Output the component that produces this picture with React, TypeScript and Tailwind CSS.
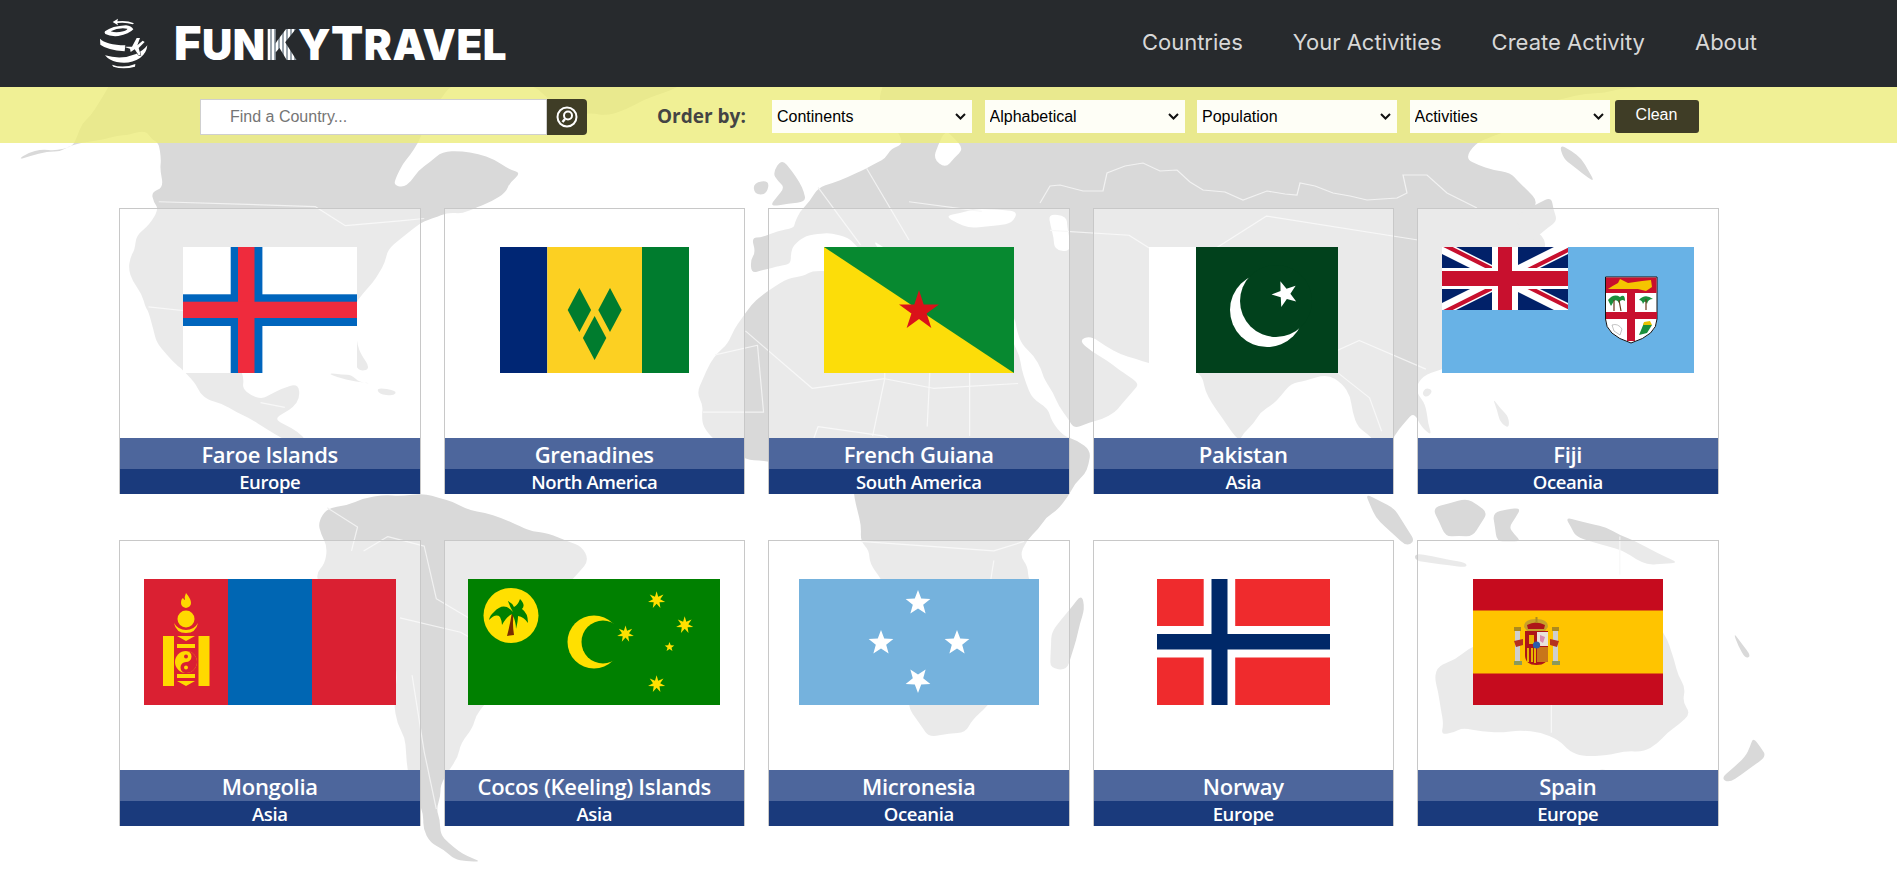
import React from "react";

const star = (cx: number, cy: number, r: number, n = 5, ratio = 0.42, rot = -90) => {
  const pts: string[] = [];
  for (let i = 0; i < n * 2; i++) {
    const a = ((rot + (i * 180) / n) * Math.PI) / 180;
    const q = i % 2 ? r * ratio : r;
    pts.push(`${(cx + q * Math.cos(a)).toFixed(2)},${(cy + q * Math.sin(a)).toFixed(2)}`);
  }
  return pts.join(" ");
};

const organic = (d: string, amp = 5, step = 34) =>
  d
    .split("Z")
    .filter((s) => s.trim())
    .map((sub, si) => {
      const nums = (sub.match(/-?\d+(\.\d+)?/g) || []).map(Number);
      const base: [number, number][] = [];
      for (let i = 0; i + 1 < nums.length; i += 2) base.push([nums[i], nums[i + 1]]);
      const pts: [number, number][] = [];
      base.forEach((p, i) => {
        const q = base[(i + 1) % base.length];
        const len = Math.hypot(q[0] - p[0], q[1] - p[1]);
        const n = Math.max(1, Math.ceil(len / step));
        for (let k = 0; k < n; k++) {
          const t = k / n;
          const s1 = Math.sin((p[0] + k * 13.7 + si) * 12.9898 + (p[1] + k) * 78.233) * 43758.5453;
          const s2 = Math.sin((p[0] + k * 7.3) * 39.346 + (p[1] + si) * 11.135) * 24634.6345;
          const j = k === 0 ? 0 : amp;
          pts.push([
            p[0] + (q[0] - p[0]) * t + (s1 - Math.floor(s1) - 0.5) * 2 * j,
            p[1] + (q[1] - p[1]) * t + (s2 - Math.floor(s2) - 0.5) * 2 * j,
          ]);
        }
      });
      const mid = (a: [number, number], b: [number, number]) => [(a[0] + b[0]) / 2, (a[1] + b[1]) / 2];
      const m0 = mid(pts[pts.length - 1], pts[0]);
      let out = `M${m0[0].toFixed(1)} ${m0[1].toFixed(1)}`;
      pts.forEach((p, i) => {
        const m = mid(p, pts[(i + 1) % pts.length]);
        out += `Q${p[0].toFixed(1)} ${p[1].toFixed(1)} ${m[0].toFixed(1)} ${m[1].toFixed(1)}`;
      });
      return out + "Z";
    })
    .join("");

const Flag = ({ w, children }: { w: number; children: React.ReactNode }) => (
  <svg width={w} height={126} viewBox={`0 0 ${w} 126`} className="block shrink-0">
    {children}
  </svg>
);

const Faroe = () => (
  <Flag w={174}>
    <rect width="174" height="126" fill="#fff" />
    <rect x="47.7" width="31.7" height="126" fill="#0065bd" />
    <rect y="47.3" width="174" height="31.7" fill="#0065bd" />
    <rect x="55" width="16.5" height="126" fill="#ef2b3d" />
    <rect y="54.7" width="174" height="16.3" fill="#ef2b3d" />
  </Flag>
);

const Grenadines = () => (
  <Flag w={189}>
    <rect width="47.3" height="126" fill="#002674" />
    <rect x="47.3" width="94.7" height="126" fill="#fcd022" />
    <rect x="142" width="47" height="126" fill="#007c2e" />
    <g fill="#007c2e">
      <polygon points="79.4,41 91.1,63 79.4,85 67.7,63" />
      <polygon points="110,41 121.7,63 110,85 98.3,63" />
      <polygon points="94.6,69 106.3,91 94.6,113 82.9,91" />
    </g>
  </Flag>
);

const Guiana = () => (
  <Flag w={190}>
    <rect width="190" height="126" fill="#078930" />
    <polygon points="0,0 190,126 0,126" fill="#fcdd09" />
    <polygon points={star(95, 64, 21, 5, 0.38)} fill="#da121a" />
  </Flag>
);

const Pakistan = () => (
  <Flag w={189}>
    <rect width="47" height="126" fill="#fff" />
    <rect x="47" width="142" height="126" fill="#01411c" />
    <circle cx="118" cy="63" r="37" fill="#fff" />
    <circle cx="127" cy="54" r="36" fill="#01411c" />
    <polygon points={star(136, 47, 13.5, 5, 0.4, -110)} fill="#fff" />
  </Flag>
);

const Fiji = () => (
  <Flag w={252}>
    <rect width="252" height="126" fill="#68b2e6" />
    <svg x="0" y="0" width="126" height="63" viewBox="0 0 126 63">
      <rect width="126" height="63" fill="#012169" />
      <path d="M0 0L126 63M126 0L0 63" stroke="#fff" strokeWidth="12.6" />
      <path d="M0 0L63 31.5M126 63L63 31.5" stroke="#c8102e" strokeWidth="4.2" transform="translate(2 -2)" />
      <path d="M126 0L63 31.5M0 63L63 31.5" stroke="#c8102e" strokeWidth="4.2" transform="translate(2 2)" />
      <rect x="50" width="26" height="63" fill="#fff" />
      <rect y="21" width="126" height="21" fill="#fff" />
      <rect x="56" width="14" height="63" fill="#c8102e" />
      <rect y="24" width="126" height="15" fill="#c8102e" />
    </svg>
    <path d="M163.5 30H215V72Q215 88 189 96Q163.5 88 163.5 72Z" fill="#fff" stroke="#111" strokeWidth="1" />
    <path d="M164 30.5H214.5V46H164Z" fill="#c8102e" />
    <rect x="185" y="46" width="8" height="48" fill="#c8102e" />
    <rect x="164" y="65" width="51" height="7" fill="#c8102e" />
    <path d="M166 42Q172 38 176 36L178 32L186 36L200 34L209 33L210 40L204 44L196 42L186 42L176 42Z" fill="#f5c400" />
    <g fill="#1a8f3c">
      <path d="M166 53Q172 46 178 50Q183 46 183 54Q179 51 177 56Q175 52 172 54L169 59Z" />
      <path d="M197 53Q203 46 211 52Q206 52 205 57Q203 52 201 57Q200 53 197 53Z" />
    </g>
    <path d="M172 53V64M177 53L179 64M204 52V63" stroke="#6b3a1a" strokeWidth="1.2" />
    <path d="M170 78Q176 76 180 82L178 88L172 84Z" fill="#fff" stroke="#888" strokeWidth=".5" />
    <path d="M197 88L202 76L210 78L205 86Z" fill="#1a8f3c" />
    <path d="M201 78L210 78L208 74L202 75Z" fill="#e9c300" />
  </Flag>
);

const Mongolia = () => (
  <Flag w={252}>
    <rect width="84" height="126" fill="#da2032" />
    <rect x="84" width="84" height="126" fill="#0066b3" />
    <rect x="168" width="84" height="126" fill="#da2032" />
    <g fill="#ffd900">
      <path d="M42 14Q47 20 47 24Q47 28 42 29Q37 28 37 24Q37 20 39 19Q40 21 41 21Q40 18 42 14Z" />
      <circle cx="42" cy="40" r="8.5" />
      <path d="M30 44Q32 54 42 54Q52 54 54 44Q50 51 42 51Q34 51 30 44Z" />
      <rect x="19" y="57" width="11" height="50" />
      <rect x="54.5" y="57" width="11" height="50" />
      <polygon points="33,57 51,57 42,62" />
      <rect x="33" y="65" width="18" height="4" />
      <circle cx="42" cy="83" r="11" />
      <rect x="33" y="95" width="18" height="4" />
      <polygon points="33,102 51,102 42,107" />
    </g>
    <path d="M42 72A5.5 5.5 0 0 1 42 83A5.5 5.5 0 0 0 42 94A11 11 0 0 0 42 72Z" fill="#da2032" />
    <circle cx="42" cy="77.5" r="2" fill="#da2032" />
    <circle cx="42" cy="88.5" r="2" fill="#ffd900" />
  </Flag>
);

const Cocos = () => (
  <Flag w={252}>
    <rect width="252" height="126" fill="#008000" />
    <ellipse cx="43" cy="36.5" rx="27.5" ry="27.5" fill="#ffe000" />
    <path d="M44 33Q42 46 39 57L46 56Q44 44 46 33Z" fill="#7a2c00" />
    <path d="M45 33Q36 22 26 33Q22 36 21 41Q28 34 32 38Q34 42 34 46Q38 38 44 35Q48 42 48 50Q50 42 50 37Q56 38 60 44Q60 34 54 30Q58 26 52 20Q50 26 46 28Q44 24 40 22Q42 28 45 33Z" fill="#008000" />
    <circle cx="126" cy="63" r="26.5" fill="#ffe000" />
    <circle cx="135" cy="63" r="21.5" fill="#008000" />
    <rect x="146" y="44" width="12" height="38" fill="#008000" />
    <g fill="#ffe000">
      <polygon points={star(157.5, 55, 8.5, 7, 0.42)} />
      <polygon points={star(188.6, 21, 8.8, 7, 0.42)} />
      <polygon points={star(216.7, 46, 8.8, 7, 0.42)} />
      <polygon points={star(201.5, 68, 5, 5, 0.42)} />
      <polygon points={star(188.6, 105, 8.8, 7, 0.42)} />
    </g>
  </Flag>
);

const Micronesia = () => (
  <Flag w={240}>
    <rect width="240" height="126" fill="#75b2dd" />
    <g fill="#fff">
      <polygon points={star(119, 24, 13)} />
      <polygon points={star(82, 64, 13, 5, 0.42, -162)} />
      <polygon points={star(158, 64, 13, 5, 0.42, -18)} />
      <polygon points={star(119, 101, 13, 5, 0.42, 90)} />
    </g>
  </Flag>
);

const Norway = () => (
  <Flag w={173}>
    <rect width="173" height="126" fill="#ef2b2d" />
    <rect x="46.7" width="31.5" height="126" fill="#fff" />
    <rect y="47" width="173" height="31.5" fill="#fff" />
    <rect x="54.5" width="16" height="126" fill="#002868" />
    <rect y="55" width="173" height="15.5" fill="#002868" />
  </Flag>
);

const Spain = () => (
  <Flag w={190}>
    <rect width="190" height="126" fill="#c60b1e" />
    <rect y="31.5" width="190" height="63" fill="#ffc400" />
    <rect x="42" y="52" width="5" height="30" fill="#cfcfcf" />
    <rect x="80" y="52" width="5" height="30" fill="#cfcfcf" />
    <rect x="41" y="82" width="8" height="4" fill="#8a9a5b" />
    <rect x="79" y="82" width="8" height="4" fill="#8a9a5b" />
    <rect x="41" y="48" width="7" height="4" fill="#ad8a1f" />
    <rect x="79" y="48" width="7" height="4" fill="#ad8a1f" />
    <path d="M41 62L50 60V66L43 68ZM86 62L77 60V66L84 68Z" fill="#b5301f" />
    <path d="M51 48Q51 40 63 40Q75 40 75 48L72 52H54Z" fill="#c8a02a" />
    <path d="M54 46Q63 41 72 46L71 50H55Z" fill="#ad1519" />
    <rect x="62.5" y="38" width="2" height="6" fill="#ad8a1f" />
    <path d="M52 52H75V76Q75 86 63.5 86Q52 86 52 76Z" fill="#ad1519" />
    <rect x="64" y="53" width="11" height="14" fill="#e8e2dc" />
    <path d="M67 56L72 58L70 64L67 62Z" fill="#d98cb0" />
    <rect x="64" y="68" width="11" height="15" fill="#c8761a" />
    <g fill="#e9b400">
      <rect x="54" y="69" width="2" height="14" />
      <rect x="58" y="69" width="2" height="14" />
      <rect x="61" y="69" width="2" height="15" />
      <rect x="56" y="56" width="5" height="9" />
    </g>
    <circle cx="63.5" cy="66" r="3.6" fill="#2a5caa" />
  </Flag>
);

const cards = [
  { n: "Faroe Islands", c: "Europe", F: Faroe },
  { n: "Grenadines", c: "North America", F: Grenadines },
  { n: "French Guiana", c: "South America", F: Guiana },
  { n: "Pakistan", c: "Asia", F: Pakistan },
  { n: "Fiji", c: "Oceania", F: Fiji },
  { n: "Mongolia", c: "Asia", F: Mongolia },
  { n: "Cocos (Keeling) Islands", c: "Asia", F: Cocos },
  { n: "Micronesia", c: "Oceania", F: Micronesia },
  { n: "Norway", c: "Europe", F: Norway },
  { n: "Spain", c: "Europe", F: Spain },
];

const land = [
  "M30 62L70 40L120 35L150 -30L200 -120L300 -220L600 -300L800 -260L760 -100L700 -40L690 27L665 70L650 115L665 120L690 85L730 45L790 50L860 90L835 130L780 165L740 172L700 190L640 250L625 300L600 340L575 400L590 450L612 500L590 505L565 425L500 410L425 440L395 490L400 540L430 562L465 540L492 530L495 560L470 590L452 605L500 640L530 680L510 670L440 625L390 590L330 550L300 500L275 470L245 380L240 370L212 290L225 220L262 165L250 130L270 120L262 27L240 0L170 20L100 45Z",
  "M860 -120L1000 -300L1180 -320L1220 -220L1120 -90L1000 -30L930 -40Z",
  "M540 508L580 512L615 530L585 526ZM622 538L655 545L650 556L625 552Z",
  "M525 820L540 790L600 770L700 760L800 800L860 830L960 870L972 900L930 960L900 1040L850 1100L800 1200L780 1250L740 1340L720 1420L740 1490L795 1530L750 1525L710 1490L690 1400L670 1300L650 1200L650 1100L560 1020L520 930L540 870Z",
  "M1240 225L1310 205L1320 170L1350 120L1430 80L1460 60L1490 30L1450 -60L1500 -200L1650 -300L2500 -300L2720 -220L2730 -100L2560 -60L2433 30L2418 60L2493 90L2538 150L2508 185L2553 235L2523 340L2463 430L2413 480L2353 510L2338 550L2363 640L2333 590L2300 640L2290 700L2262 640L2232 590L2215 530L2190 510L2130 530L2080 590L2045 650L2010 590L1985 520L1960 495L1900 490L1850 470L1800 430L1780 440L1845 500L1880 530L1840 590L1773 625L1718 500L1678 420L1660 370L1650 320L1630 290L1540 292L1510 270L1492 300L1470 250L1440 230L1475 282L1455 292L1400 225L1370 215L1330 220L1310 240L1305 280L1240 300Z",
  "M1240 365L1300 310L1370 295L1440 285L1455 320L1520 345L1610 355L1650 365L1693 530L1755 640L1800 670L1790 720L1763 765L1693 860L1683 890L1713 960L1698 1040L1663 1130L1643 1180L1593 1260L1533 1270L1500 1210L1490 1100L1460 960L1420 860L1410 770L1395 720L1330 700L1230 690L1160 620L1150 550L1185 465Z",
  "M1290 60L1320 110L1330 150L1270 160L1295 120L1275 90ZM1243 110L1270 105L1265 135L1245 135Z",
  "M1785 970L1790 1000L1760 1130L1733 1125L1735 1050Z",
  "M2573 30L2610 60L2632 110L2610 90L2580 60ZM2353 538L2365 545L2355 560L2346 552ZM2463 560L2490 600L2490 625L2475 610ZM2500 180L2560 140L2570 190L2520 240Z",
  "M2253 760L2300 790L2335 860L2320 870L2270 810ZM2363 790L2420 770L2455 800L2430 850L2385 850ZM2463 800L2510 790L2490 830L2510 860L2470 860ZM2335 885L2420 905L2420 915L2335 900ZM2583 810L2650 830L2770 905L2720 910L2680 880L2600 850Z",
  "M2373 1120L2463 1060L2563 1040L2600 1010L2673 1030L2690 1060L2735 1010L2763 1110L2790 1220L2713 1300L2613 1310L2543 1260L2413 1250L2378 1265Z",
  "M2635 1335L2660 1340L2645 1360ZM2893 1270L2915 1310L2853 1365L2840 1355L2880 1310Z",
  "M2860 1050L2890 1100L2880 1105Z",
];

const borders = [
  "M262 150L520 160L570 200L660 190L700 185",
  "M245 370L320 380L400 440",
  "M430 570L470 580",
  "M1733 210L1863 220L1963 300L2003 400L2113 470L2173 480L2243 440L2353 500",
  "M2003 250L2090 180L2340 230",
  "M2200 500L2260 560L2280 630",
  "M1180 470L1250 450L1260 590L1160 590",
  "M1230 420L1340 540L1460 520L1540 540L1680 530",
  "M1460 340L1460 520L1440 640",
  "M1540 360L1530 620",
  "M1600 360L1600 640",
  "M1330 690L1350 620L1460 640L1530 700L1690 690",
  "M1420 860L1640 880L1690 860",
  "M1500 1050L1680 1060",
  "M1510 1160L1620 1160",
  "M1640 900L1620 1060",
  "M540 790L590 830L580 880",
  "M600 880L640 850L700 870L720 980L800 1040",
  "M660 1020L760 1050L830 1100",
  "M680 1140L700 1300L720 1420",
  "M1350 120L1420 240M1430 80L1500 230M1500 150L1620 170",
  "M2673 850L2673 930",
  "M2560 1060L2560 1260M2560 1170L2700 1170",
];

const WorldMap = () => (
  <svg className="absolute inset-0 h-[880px] w-[1897px]" viewBox="0 0 1897 880" aria-hidden="true">
    <g transform="translate(0 130) scale(0.606 0.4783)">
      <g fill="#d9d9d9">
        {land.map((d, i) => (
          <path key={i} d={organic(d, i < 6 || i === 10 ? 7 : 2)} />
        ))}
      </g>
      <g fill="#fff">
        <path d={organic("M1560 180L1610 165L1680 170L1670 195L1600 205Z", 3)} />
        <path d={organic("M1730 175L1760 180L1765 255L1740 250Z", 3)} />
        <path d={organic("M1540 60L1560 0L1590 40L1560 80Z", 3)} />
      </g>
      <g fill="none" stroke="#f2f2f2" strokeWidth="1.2">
        {borders.map((d, i) => (
          <path key={i} d={d} vectorEffect="non-scaling-stroke" strokeLinejoin="round" />
        ))}
      </g>
    </g>
    <path
      d="M1040 203L1050 186L1060 185L1083 191L1103 191L1107 173L1125 166L1143 163L1160 171L1177 170L1190 182L1203 190L1225 192L1243 200L1267 191L1285 194L1297 195L1300 183L1315 186L1333 193L1350 196L1367 200L1397 198L1407 193L1403 175L1427 175L1447 193L1477 208"
      fill="none"
      stroke="#f2f2f2"
      strokeWidth="1.2"
    />
  </svg>
);

const Logo = () => (
  <svg width="52" height="55" viewBox="24 20 156 165" className="shrink-0">
    <g fill="#fff">
      <path d="M45 66Q66 50 108 48Q124 50 130 60Q118 74 85 80Q60 82 46 74Q42 70 45 66ZM62 66Q78 72 100 66Q112 62 112 58Q85 54 62 66Z" fillRule="evenodd" />
      <path d="M30 88Q48 106 106 108L104 126Q52 122 31 106Z" />
      <path d="M45 138Q95 152 138 134Q160 124 172 108Q170 132 150 146Q120 166 80 158Q58 154 45 138Z" />
      <path d="M66 166Q100 178 136 164L135 172Q100 182 70 172Z" />
      <path d="M68 38L84 28L82 36Q110 32 132 42L128 45Q108 38 82 41L84 48Z" />
    </g>
    <path d="M106 112L126 112L140 86L150 86L142 108L158 94L164 98L146 116L152 138L146 138L134 120L122 128L120 118L106 114Z" fill="#fff" stroke="#272a2d" strokeWidth="3" paintOrder="stroke" />
  </svg>
);

const selects = ["Continents", "Alphabetical", "Population", "Activities"];

export default function App() {
  return (
    <div className="relative h-[880px] w-full overflow-hidden bg-white font-['Open_Sans',sans-serif]">
      <WorldMap />
      <div className="relative flex flex-col">
        <header className="flex h-[87px] items-center bg-[rgba(36,39,42,0.985)] pl-[98px] pr-[140px]">
          <Logo />
          <div className="-mt-[2px] ml-[24px] flex items-baseline whitespace-nowrap font-['Inter',sans-serif] font-black leading-none text-white">
            <span className="text-[47px] tracking-[0.5px]">F</span>
            <span className="text-[42px] tracking-[0.5px]">UN</span>
            <span className="bg-[repeating-linear-gradient(90deg,#9aa4ad_0,#9aa4ad_2px,#fff_2px,#fff_4px)] bg-clip-text text-[42px] tracking-[0.5px] text-transparent">K</span>
            <span className="text-[42px] tracking-[0.5px]">Y</span>
            <span className="text-[47px] tracking-[0.5px]">T</span>
            <span className="text-[42px] tracking-[0.5px]">RAVEL</span>
          </div>
          <nav className="-mt-[2px] ml-auto flex items-center gap-[50px] font-['Inter',sans-serif] text-[22px] text-[#d8d8d8]">
            <a>Countries</a>
            <a>Your Activities</a>
            <a>Create Activity</a>
            <a>About</a>
          </nav>
        </header>
        <div className="flex h-[56px] items-center bg-[rgba(236,236,123,0.8)] pl-[200px] pt-[3px]">
          <div className="flex h-[36px] w-[387px]">
            <input
              placeholder="Find a Country..."
              className="h-full w-[347px] border-[1.5px] border-[#cfcfcf] bg-white pl-[29px] font-['Liberation_Sans',sans-serif] text-[16px] outline-none placeholder:text-[#757575]"
            />
            <button className="flex h-full w-[40px] items-center justify-center rounded-r-[4px] bg-[#3f3d26]">
              <svg width="22" height="22" viewBox="0 0 22 22" fill="none" stroke="#fff">
                <circle cx="11" cy="11" r="9.5" strokeWidth="2" />
                <circle cx="12" cy="9.5" r="4" strokeWidth="2" />
                <path d="M9 13L6.5 16" strokeWidth="2.4" />
              </svg>
            </button>
          </div>
          <span className="ml-[70px] w-[115px] text-[19px] font-bold text-[#444]">Order by:</span>
          <div className="flex gap-[12.5px]">
            {selects.map((s) => (
              <div key={s} className="relative h-[33px] w-[200px]">
                <select
                  defaultValue={s}
                  className="h-full w-full appearance-none bg-[#fefef6] pl-[5px] font-['Liberation_Sans',sans-serif] text-[16px] text-black outline-none"
                >
                  <option>{s}</option>
                </select>
                <svg width="11" height="7" viewBox="0 0 11 7" fill="none" stroke="#111" strokeWidth="2" className="pointer-events-none absolute right-[6px] top-[13px]">
                  <path d="M1 1L5.5 5.5L10 1" />
                </svg>
              </div>
            ))}
          </div>
          <button className="ml-[5px] h-[33px] w-[84px] rounded-[3px] bg-[#3f3d26] pb-[3px] font-['Liberation_Sans',sans-serif] text-[16px] text-white">
            Clean
          </button>
        </div>
        <main className="grid grid-cols-[repeat(5,301.5px)] gap-x-[23px] gap-y-[46px] pl-[119px] pt-[65px]">
          {cards.map(({ n, c, F }) => (
            <div key={n} className="flex h-[286px] flex-col border border-b-0 border-[#c8c8c8] bg-white/45">
              <div className="flex h-[229px] justify-center pt-[38px]">
                <F />
              </div>
              <div className="flex h-[31px] items-center justify-center whitespace-nowrap bg-[#4d669c] pt-[1px] text-[22px] font-semibold tracking-[-0.3px] text-white">
                {n}
              </div>
              <div className="flex h-[25px] items-center justify-center whitespace-nowrap bg-[#1a3a7c] text-[18.5px] font-semibold tracking-[-0.4px] text-white">
                {c}
              </div>
            </div>
          ))}
        </main>
      </div>
    </div>
  );
}
